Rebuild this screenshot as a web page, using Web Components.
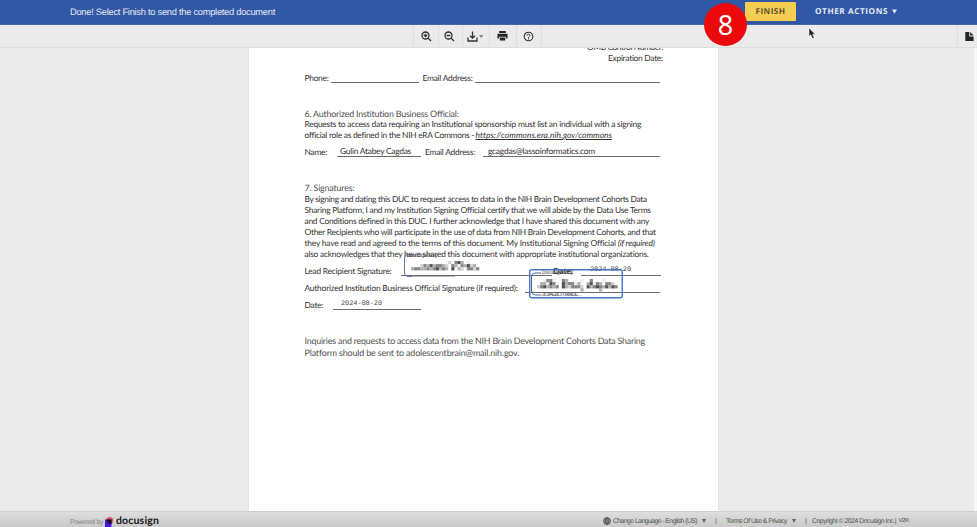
<!DOCTYPE html>
<html lang="en"><head><meta charset="utf-8"><title>Docusign</title>
<style>html,body{margin:0;height:100%;overflow:hidden;background:#ebebec}</style></head>
<body><sign-app></sign-app>
<script>
const define=(name,html,after)=>customElements.define(name,class extends HTMLElement{
  connectedCallback(){
    if(this.shadowRoot)return;
    const t=document.createElement('template');t.innerHTML=html;
    this.attachShadow({mode:'open'}).append(t.content.cloneNode(true));
    if(after)after(this,this.shadowRoot);
  }
});
// A single text line whose tracking is set so that it spans the width in its "w" attribute.
define('fit-line','<style>:host{display:block;white-space:pre;flex:none;text-rendering:geometricPrecision}span{display:inline-block;text-decoration:var(--line,none)}</style><span><slot></slot></span>',(el,root)=>{
  const w=+el.getAttribute('w'),s=root.querySelector('span'),n=el.textContent.length;
  el.style.width=w+'px';
  s.style.letterSpacing=((w-s.getBoundingClientRect().width)/n)+'px';
});
// Underlined form field, with an optional value above the rule.
define('form-field','<style>:host{display:block;height:10px;border-bottom:1px solid #6b6b6b;box-sizing:border-box;flex:none;line-height:9px}::slotted(*){margin-left:var(--inset,0);margin-top:-.5px}</style><slot></slot>');
define('top-bar',`<style>
:host{display:flex;height:25px;background:#3158a4;align-items:center;position:relative;color:#e3eaf7;font:9.3px/24px "Liberation Sans",sans-serif;padding-left:70px;box-sizing:border-box;flex:none;border-bottom:1px solid #4467ad}
.msg{width:675px}.finish{width:51px;height:19px;margin-top:-2px;background:#f5cd50;border-radius:1px;display:flex;justify-content:center;color:#5c5231}
.finish,.other{font:700 8.2px/19px "Open Sans",sans-serif}.other{margin-left:19px;display:flex;align-items:center;gap:4px;margin-top:-1px}
svg{display:block}.step{position:absolute;left:704px;top:2.5px;width:43px;height:43px;border-radius:50%;background:#eb090b;color:#fff;text-align:center;font:27px/43px "Noto Sans",sans-serif;z-index:3}
.cursor{position:absolute;left:808px;top:27px;z-index:4}
</style><div class="msg"><fit-line w="205">Done! Select Finish to send the completed document</fit-line></div>
<div class="finish"><fit-line w="30">FINISH</fit-line></div>
<div class="other"><fit-line w="73">OTHER ACTIONS</fit-line><svg width="5" height="5"><path d="M0 .5h5L2.5 4.7z" fill="#e9effa"/></svg></div>
<div class="step">8</div>
<svg class="cursor" width="8" height="13" viewBox="0 0 8 13"><path d="M1 1v8.3l1.9-1.5 1.5 3.6 1.7-.7-1.5-3.4h2.5z" fill="#252525" stroke="#f5f5f5" stroke-width=".5"/></svg>`);
define('tool-bar',`<style>
:host{display:flex;height:23px;background:#ebebeb;border-bottom:1px solid #dedede;box-sizing:border-box;padding-left:413px;flex:none;position:relative;z-index:1}
div{border-left:1px solid #dfdfdf;display:flex;align-items:center;justify-content:center;box-sizing:border-box}
.end{border-right:1px solid #dfdfdf}.page{margin-left:auto;width:20px;padding-left:4px}
svg{display:block;fill:none;stroke:#303030;stroke-width:1.3}
</style>
<div style="width:25px"><svg width="11" height="11" viewBox="0 0 11 11"><circle cx="4.5" cy="4.5" r="3.5"/><path d="M7.1 7.1 10 10M2.7 4.5h3.6M4.5 2.7v3.6"/></svg></div>
<div style="width:24px;padding-right:3px"><svg width="11" height="11" viewBox="0 0 11 11"><circle cx="4.5" cy="4.5" r="3.5"/><path d="M7.1 7.1 10 10M2.7 4.5h3.6"/></svg></div>
<div style="width:27px;padding-right:2px"><svg width="17" height="11" viewBox="0 0 17 11"><path d="M1 6.5V10h9V6.5M5.5.5v6.3M3 4.7l2.5 2.5L8 4.7"/><path d="M12 4h4.4l-2.2 3z" fill="#858585" stroke="none"/></svg></div>
<div style="width:27px;padding-right:2px"><svg width="11" height="10" viewBox="0 0 11 10"><path d="M2.2 0h6.6v2H2.2zM.5 2.8h10v4.7H9V5.8H2v1.7H.5zM2.8 6.5h5.4v3H2.8z" fill="#252525" stroke="none"/></svg></div>
<div class="end" style="width:26px;padding-right:1px"><svg width="11" height="11" viewBox="0 0 11 11"><circle cx="5.5" cy="5.5" r="4.3" stroke-width="1.1"/><path d="M4 4.6c0-2 3-1.9 3-.1 0 1.1-1.5 1-1.5 2.1M5.5 7.2v1.2" stroke-width="1"/></svg></div>
<div class="page"><svg width="9" height="9" viewBox="0 0 9 9"><path d="M.3 0h4v4.5h4.3V9H.3zM5.2 0l3.4 3.5H5.2z" fill="#252525" stroke="none"/></svg></div>`);
// Signature stamp with its contents pixelated for privacy.
define('sign-stamp',`<style>:host{display:block;position:absolute}svg{display:block;overflow:visible}</style><svg></svg>`,(el,root)=>{
  const svg=root.querySelector('svg'),rows=el.getAttribute('cells').split('/'),tone={1:'#ececec',2:'#d2d2d2',3:'#b0b0b0',4:'#858585',5:'#505050'};
  const x0=+el.getAttribute('x'),y0=+el.getAttribute('y'),c=3.1;
  svg.setAttribute('width',el.getAttribute('w'));svg.setAttribute('height',el.getAttribute('h'));
  let s=el.hasAttribute('selected')
   ?'<rect x=".75" y=".75" width="92.5" height="28" rx="1.5" fill="none" stroke="#4777c4" stroke-width="1.4"/><path d="M12 4H6Q2.5 4 2.5 8v14q0 4 4 4h6" fill="none" stroke="#526a96"/>'
   :'<path d="M9 .5H4Q.5.5.5 4v15q0 3.5 3.5 3.5h4" fill="none" stroke="#62789c"/><path d="M8 22.5h43" stroke="#999" stroke-width=".7"/>';
  rows.forEach((r,j)=>[...r].forEach((v,i)=>{if(tone[v])s+=`<rect x="${x0+i*c}" y="${y0+j*c}" width="3.2" height="3.2" fill="${tone[v]}"/>`}));
  svg.innerHTML=s;
});
define('doc-page',`<style>
:host{display:block;position:relative;width:469px;margin-left:249px;height:463px;background:#fff;overflow:hidden;font:8.4px/11px Lato,"Open Sans",sans-serif;color:#333;padding:0 55px 0 55.5px;box-sizing:border-box;box-shadow:0 0 1px #bbb}
.r{display:flex;height:11px}.end{flex-direction:column;align-items:flex-end;height:22px;margin-top:-6.5px}
h2{font:8.9px/11px Lato,sans-serif;margin:0;color:#505050}.soft{color:#505050;font-size:8.9px}
.body{line-height:11.15px}i{font-style:italic}.mono{font:7px/8px "Liberation Mono",monospace;color:#454545}
a{color:inherit;--line:underline;font-style:italic}
.tiny{position:absolute;font:5.2px/6px "Liberation Sans",sans-serif;color:#454545}
</style>
<div class="r end"><fit-line w="76">OMB Control Number:</fit-line><fit-line w="55">Expiration Date:</fit-line></div>
<div class="r" style="margin-top:9.5px"><fit-line w="24">Phone:</fit-line><form-field style="width:88px;margin-left:2.5px"></form-field><fit-line w="50" style="margin-left:3.5px">Email Address:</fit-line><form-field style="width:185px;margin-left:2.5px"></form-field></div>
<h2 style="margin-top:24px"><fit-line w="154">6. Authorized Institution Business Official:</fit-line></h2>
<fit-line w="337">Requests to access data requiring an Institutional sponsorship must list an individual with a signing</fit-line>
<div class="r"><fit-line w="171">official role as defined in the NIH eRA Commons - </fit-line><a><fit-line w="136">https://commons.era.nih.gov/commons</fit-line></a></div>
<div class="r" style="margin-top:6px"><fit-line w="22.5">Name:</fit-line><form-field style="width:84px;margin-left:10px;--inset:3px"><fit-line w="71">Gulin Atabey Cagdas</fit-line></form-field><fit-line w="50" style="margin-left:4px">Email Address:</fit-line><form-field style="width:177px;margin-left:8px;--inset:5px"><fit-line w="107">gcagdas@lassoinformatics.com</fit-line></form-field></div>
<h2 style="margin-top:24px"><fit-line w="50">7. Signatures:</fit-line></h2>
<div class="body" style="padding-top:.5px"><fit-line w="342.5">By signing and dating this DUC to request access to data in the NIH Brain Development Cohorts Data</fit-line>
<fit-line w="346">Sharing Platform, I and my Institution Signing Official certify that we will abide by the Data Use Terms</fit-line>
<fit-line w="344.5">and Conditions defined in this DUC. I further acknowledge that I have shared this document with any</fit-line>
<fit-line w="351.5">Other Recipients who will participate in the use of data from NIH Brain Development Cohorts, and that</fit-line>
<fit-line w="350">they have read and agreed to the terms of this document. My Institutional Signing Official <i>(if required)</i></fit-line>
<fit-line w="344.5">also acknowledges that they have shared this document with appropriate institutional organizations.</fit-line></div>
<div class="r" style="margin-top:6px"><fit-line w="87">Lead Recipient Signature:</fit-line><form-field style="width:151px;margin-left:9px"></form-field><fit-line w="20" style="margin-left:1.5px;font-weight:700">Date:</fit-line><form-field style="width:80px;margin-left:8px;--inset:9px"><fit-line class="mono" w="41">2024-08-20</fit-line></form-field></div>
<div class="r" style="margin-top:6px"><fit-line w="213">Authorized Institution Business Official Signature (if required):</fit-line><form-field style="width:135px;margin-left:7.5px"></form-field></div>
<div class="r" style="margin-top:6px"><fit-line w="19">Date:</fit-line><form-field style="width:88px;margin-left:9.5px;--inset:8px"><fit-line class="mono" w="41">2024-08-20</fit-line></form-field></div>
<fit-line class="soft" w="340.5" style="margin-top:24px">Inquiries and requests to access data from the NIH Brain Development Cohorts Data Sharing</fit-line>
<fit-line class="soft" w="214.5" style="margin-top:1px">Platform should be sent to adolescentbrain@mail.nih.gov.</fit-line>
<sign-stamp style="left:155px;top:206px" w="78" h="24" x="7" y="7" cells="0000000000002045301000/0002435344320431435230/3443343453430503204424"></sign-stamp>
<sign-stamp selected style="left:280px;top:220.5px" w="94" h="30" x="8" y="10" cells="00144100430000100400010000/03315410534413003514304420/24534340532444205345435354/00000000000000300000300000"></sign-stamp>
<fit-line class="tiny" w="32" style="left:157.5px;top:204.5px">DocuSigned by:</fit-line>
<fit-line class="tiny" w="32" style="left:293px;top:221.5px">DocuSigned by:</fit-line>
<fit-line class="tiny" w="40" style="left:293px;top:243.5px">3C8AEBCF0984DE…</fit-line>`);
define('page-footer',`<style>
:host{display:flex;flex:none;height:16px;background:linear-gradient(#dedede,#c9c9c9);border-top:1px solid #d2d2d2;box-sizing:border-box;font:6.8px/9px "Liberation Sans",sans-serif;color:#505050;padding:5px 0 0 70px;overflow:hidden}
svg{display:block;flex:none}.brand{font:700 10.5px/9px Lato,sans-serif;color:#151515;margin-left:2px}.links{display:flex;margin-left:444px}
</style><fit-line w="33" style="color:#808080;padding-top:1px">Powered by</fit-line>
<svg style="margin-left:1px" width="10" height="10" viewBox="0 0 10 10"><circle cx="5.7" cy="3.5" r="3.5" fill="#ef5052"/><path d="M1 2.5h6.5v7.5H1z" fill="#4b15df"/><path d="M2.8 2.5h4.7v4.5Q3 7 2.8 2.5z" fill="#180f24"/></svg>
<fit-line class="brand" w="43">docusign</fit-line>
<div class="links"><svg width="8" height="8" viewBox="0 0 8 8" fill="none" stroke="#4d4d4d" stroke-width=".8"><circle cx="4" cy="4" r="3.5"/><ellipse cx="4" cy="4" rx="1.6" ry="3.5"/><path d="M.5 4h7M1 2.2h6M1 5.8h6M4 .5v7"/></svg>
<fit-line w="84" style="margin-left:2px">Change Language - English (US)</fit-line><svg style="margin:1.5px 0 0 5px" width="4" height="4"><path d="M0 0h4L2 4z" fill="#606060"/></svg>
<fit-line w="2" style="margin-left:9px">|</fit-line><fit-line w="61" style="margin-left:9px">Terms Of Use &amp; Privacy</fit-line><svg style="margin:1.5px 0 0 5px" width="4" height="4"><path d="M0 0h4L2 4z" fill="#606060"/></svg>
<fit-line w="2" style="margin-left:9px">|</fit-line><fit-line w="84" style="margin-left:5px">Copyright © 2024 Docusign Inc.|</fit-line><fit-line w="10" style="margin-left:2.5px;font-size:6px">V2R</fit-line></div>`);
define('sign-app',`<style>:host{display:flex;flex-direction:column;width:977px;height:527px;overflow:hidden;background:#ebebec}
main{height:463px;flex:none;border-right:3px solid #f7f7f7;box-sizing:border-box}</style>
<top-bar></top-bar><tool-bar></tool-bar><main><doc-page></doc-page></main><page-footer></page-footer>`);
</script></body></html>
